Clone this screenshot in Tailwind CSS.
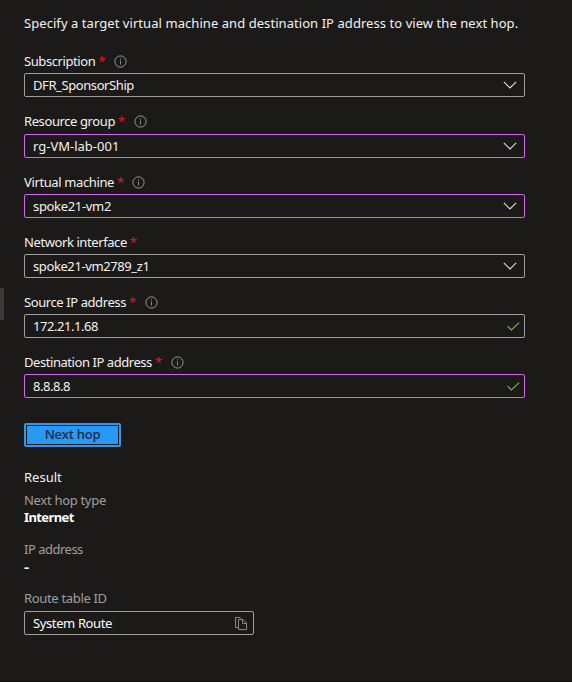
<!DOCTYPE html>
<html lang="en">
<head>
<meta charset="utf-8">
<title>Next hop</title>
<script src="https://cdn.jsdelivr.net/npm/@tailwindcss/browser@4"></script>
</head>
<body class="relative h-[682px] w-[572px] overflow-hidden border-b border-[#140a0d] bg-[#1b1a19] font-['Noto_Sans','Open_Sans',sans-serif] text-[13px] leading-4 text-[#f3f2f1]">
<svg class="hidden">
  <symbol id="info" viewBox="0 0 13 13"><circle cx="6.500" cy="6.500" r="5.600" fill="none" stroke="#9a9896" stroke-width="1"/><path d="M6.500 5.500v4M6.500 3.300v1.200" stroke="#8a8886" stroke-width="1" fill="none"/></symbol>
  <symbol id="chevron" viewBox="0 0 14 8"><path d="M.8 .8 7 7 13.200 .8" fill="none" stroke="#e1dfdd" stroke-width="1.100"/></symbol>
  <symbol id="check" viewBox="0 0 13 9"><path d="M.6 4.200 4.400 8 12.200 .6" fill="none" stroke="#7fac45" stroke-width="1.200"/></symbol>
</svg>
<div class="absolute left-0 top-[288px] h-8 w-1 bg-[#3b3a39]"></div>
<main class="flex flex-col items-start pl-6 pt-[15px] whitespace-nowrap">
  <p class="h-[34px] tracking-[0.06px]">Specify a target virtual machine and destination IP address to view the next hop.</p>

  <form class="flex w-[501px] flex-col">
    <div class="mb-[13px]">
      <div class="flex h-6 items-center"><span class="tracking-[-0.42px]">Subscription</span><span class="ml-[3px] w-[6px] text-[#e81123]">*</span><svg class="ml-[10px] mt-px size-[13px]"><use href="#info"/></svg></div>
      <div class="flex h-6 items-center justify-between rounded-[2px] border border-[#a19f9d] pl-2 pr-[7px]"><span class="tracking-[-0.41px]">DFR_SponsorShip</span><svg class="h-2 w-3.5"><use href="#chevron"/></svg></div>
    </div>
    <div class="mb-3">
      <div class="-mt-px flex h-[25px] items-start pt-[4px]"><span class="tracking-[-0.4px]">Resource group</span><span class="ml-[3px] w-[6px] text-[#e81123]">*</span><svg class="ml-[10px] mt-[2px] size-[13px]"><use href="#info"/></svg></div>
      <div class="flex h-6 items-center justify-between rounded-[2px] border border-[#d664f2] pl-2 pr-[7px]"><span>rg-VM-lab-001</span><svg class="h-2 w-3.5"><use href="#chevron"/></svg></div>
    </div>
    <div class="mb-3">
      <div class="flex h-6 items-center"><span class="tracking-[-0.38px]">Virtual machine</span><span class="ml-[3px] w-[6px] text-[#e81123]">*</span><svg class="ml-[9px] size-[13px]"><use href="#info"/></svg></div>
      <div class="flex h-6 items-center justify-between rounded-[2px] border border-[#d664f2] pl-2 pr-[7px]"><span class="tracking-[-0.33px]">spoke21-vm2</span><svg class="h-2 w-3.5"><use href="#chevron"/></svg></div>
    </div>
    <div class="mb-3">
      <div class="flex h-6 items-center"><span class="tracking-[-0.41px]">Network interface</span><span class="ml-[3px] w-[6px] text-[#e81123]">*</span></div>
      <div class="flex h-6 items-center justify-between rounded-[2px] border border-[#a19f9d] pl-2 pr-[7px]"><span class="tracking-[-0.4px]">spoke21-vm2789_z1</span><svg class="h-2 w-3.5"><use href="#chevron"/></svg></div>
    </div>
    <div class="mb-3">
      <div class="flex h-6 items-center"><span class="tracking-[-0.41px]">Source IP address</span><span class="ml-[3px] w-[6px] text-[#e81123]">*</span><svg class="ml-[10px] size-[13px]"><use href="#info"/></svg></div>
      <div class="flex h-6 items-center justify-between rounded-[2px] border border-[#a19f9d] pl-2 pr-[4px]"><span class="tracking-[-0.44px]">172.21.1.68</span><svg class="h-[9px] w-[13px]"><use href="#check"/></svg></div>
    </div>
    <div class="mb-[25px]">
      <div class="flex h-6 items-center"><span class="tracking-[-0.44px]">Destination IP address</span><span class="ml-[3px] w-[6px] text-[#e81123]">*</span><svg class="ml-[10px] mt-px size-[13px]"><use href="#info"/></svg></div>
      <div class="flex h-6 items-center justify-between rounded-[2px] border border-[#d664f2] pl-2 pr-[4px]"><span class="tracking-[-0.48px]">8.8.8.8</span><svg class="h-[9px] w-[13px]"><use href="#check"/></svg></div>
    </div>
    <button type="button" class="flex h-6 w-[97px] rounded-[2px] bg-[#2899f5] p-[2px]"><span class="flex h-5 w-full items-start justify-center border border-[#1b1a19] font-['Open_Sans',sans-serif] font-semibold tracking-[-0.25px] text-[#1b2f42]">Next hop</span></button>
  </form>

  <section class="mt-[22px] flex flex-col items-start">
    <h2 class="mb-[7px]">Result</h2>
    <div class="h-[17px] tracking-[-0.3px] text-[#a19f9d]">Next hop type</div>
    <div class="mb-4 font-bold tracking-[-0.6px] text-white">Internet</div>
    <div class="h-[17px] tracking-[-0.5px] text-[#a19f9d]">IP address</div>
    <div class="mb-4 translate-y-px font-bold text-white"><span class="inline-block origin-left scale-x-125">-</span></div>
    <div class="mb-[5px] tracking-[-0.33px] text-[#a19f9d]">Route table ID</div>
    <div class="flex h-6 w-[230px] items-center justify-between rounded-[2px] border border-[#a19f9d] pl-2 pr-[6px]"><span class="tracking-[-0.38px] text-white">System Route</span>
      <svg class="mt-px h-[13px] w-3" viewBox="0 0 12 13" fill="none" stroke="#8a8886" stroke-width="1"><path d="M3 10.500H.5V.5h4.700l1 1M3.500 2.500h4.500l3.500 3.500v6.500h-8zM7.500 2.500v4h4"/></svg></div>
  </section>
</main>
</body>
</html>
